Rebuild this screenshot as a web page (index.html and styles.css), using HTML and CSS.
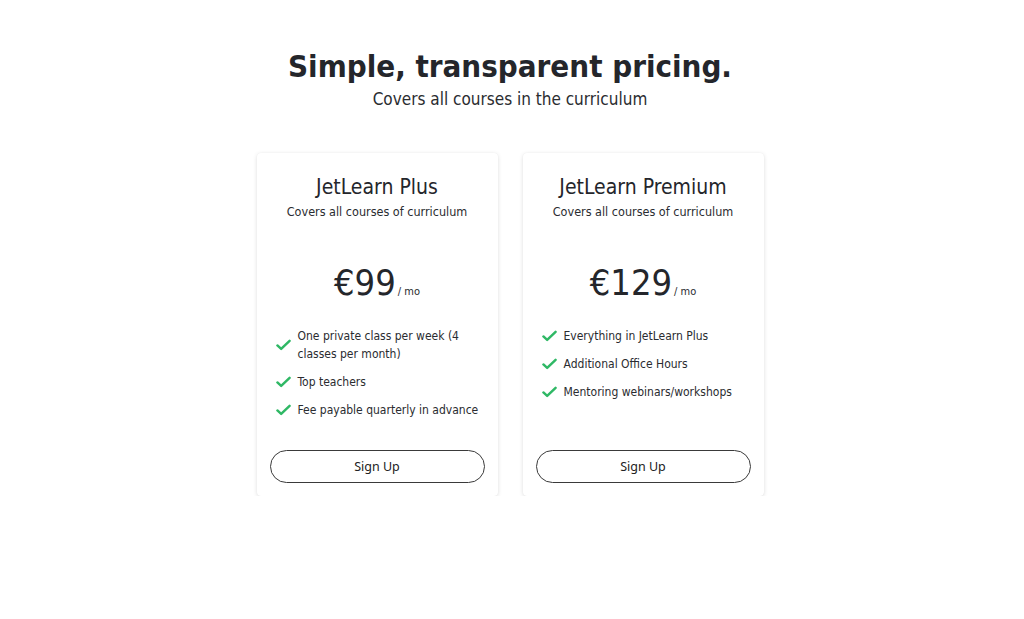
FILE: index.html
```html
<!DOCTYPE html>
<html lang="en">
<head>
<meta charset="utf-8">
<title>Pricing</title>
<link rel="stylesheet" href="styles.css">
</head>
<body>
<main class="page">
  <header class="hero">
    <h1 class="hero-title">Simple, transparent pricing.</h1>
    <p class="hero-sub">Covers all courses in the curriculum</p>
  </header>
  <section class="plans">
    <article class="plan">
      <h2 class="plan-name">JetLearn Plus</h2>
      <p class="plan-desc">Covers all courses of curriculum</p>
      <div class="plan-price"><span class="amount">€99</span><span class="per">/ mo</span></div>
      <ul class="features">
        <li class="feature"><svg class="check" viewBox="0 0 16 12"><path d="M1.5 6.5 L5.5 10.2 L14.5 1.5" fill="none" stroke="currentColor" stroke-width="2.6" stroke-linecap="round" stroke-linejoin="round"/></svg><span>One private class per week (4 classes per month)</span></li>
        <li class="feature"><svg class="check" viewBox="0 0 16 12"><path d="M1.5 6.5 L5.5 10.2 L14.5 1.5" fill="none" stroke="currentColor" stroke-width="2.6" stroke-linecap="round" stroke-linejoin="round"/></svg><span>Top teachers</span></li>
        <li class="feature"><svg class="check" viewBox="0 0 16 12"><path d="M1.5 6.5 L5.5 10.2 L14.5 1.5" fill="none" stroke="currentColor" stroke-width="2.6" stroke-linecap="round" stroke-linejoin="round"/></svg><span>Fee payable quarterly in advance</span></li>
      </ul>
      <button class="signup" type="button">Sign Up</button>
    </article>
    <article class="plan">
      <h2 class="plan-name">JetLearn Premium</h2>
      <p class="plan-desc">Covers all courses of curriculum</p>
      <div class="plan-price"><span class="amount">€129</span><span class="per">/ mo</span></div>
      <ul class="features">
        <li class="feature"><svg class="check" viewBox="0 0 16 12"><path d="M1.5 6.5 L5.5 10.2 L14.5 1.5" fill="none" stroke="currentColor" stroke-width="2.6" stroke-linecap="round" stroke-linejoin="round"/></svg><span>Everything in JetLearn Plus</span></li>
        <li class="feature"><svg class="check" viewBox="0 0 16 12"><path d="M1.5 6.5 L5.5 10.2 L14.5 1.5" fill="none" stroke="currentColor" stroke-width="2.6" stroke-linecap="round" stroke-linejoin="round"/></svg><span>Additional Office Hours</span></li>
        <li class="feature"><svg class="check" viewBox="0 0 16 12"><path d="M1.5 6.5 L5.5 10.2 L14.5 1.5" fill="none" stroke="currentColor" stroke-width="2.6" stroke-linecap="round" stroke-linejoin="round"/></svg><span>Mentoring webinars/workshops</span></li>
      </ul>
      <button class="signup" type="button">Sign Up</button>
    </article>
  </section>
</main>
</body>
</html>
```

FILE: styles.css
```css
* { box-sizing: border-box; }
html, body { margin: 0; padding: 0; background: #fff; }
body {
  font-family: "DejaVu Sans Condensed", "DejaVu Sans", sans-serif;
  color: #24262b;
}
.page {
  display: flex;
  flex-direction: column;
  align-items: center;
  padding: 46px 4px 0 0;
}
.hero { text-align: center; }
.hero-title {
  margin: 0;
  font-size: 31px;
  line-height: 40px;
  font-weight: bold;
  color: #24262b;
}
.hero-sub {
  margin: 2px 0 0;
  font-size: 17px;
  line-height: 22px;
  color: #2a2c30;
}
.plans {
  display: flex;
  gap: 25px;
  margin-top: 43px;
  align-items: stretch;
}
.plan {
  width: 241px;
  display: flex;
  flex-direction: column;
  align-items: stretch;
  padding: 20px 13px 13px;
  background: #fff;
  border-radius: 4px;
  box-shadow: 0 1px 4px rgba(0,0,0,0.13), 0 0 1px rgba(0,0,0,0.06);
  text-align: center;
}
.plan-name {
  margin: 0;
  font-size: 21px;
  line-height: 28px;
  font-weight: normal;
  color: #24262b;
}
.plan-desc {
  margin: 2px 0 0;
  font-size: 12.5px;
  line-height: 18px;
  color: #2a2c30;
}
.plan-price {
  margin-top: 40px;
  display: flex;
  justify-content: center;
  align-items: baseline;
  height: 44px;
}
.amount {
  font-size: 36px;
  line-height: 44px;
  color: #24262b;
}
.per {
  font-size: 11px;
  margin-left: 2px;
  color: #2a2c30;
}
.features {
  list-style: none;
  margin: 22px 0 0;
  padding: 0 0 0 6px;
  display: flex;
  flex-direction: column;
  gap: 10px;
  text-align: left;
}
.feature {
  display: flex;
  align-items: center;
  gap: 7px;
  font-size: 12px;
  line-height: 18px;
  color: #2a2c30;
}
.check {
  flex: none;
  width: 15px;
  height: 12px;
  color: #2fb865;
}
.signup {
  margin-top: auto;
  height: 33px;
  width: 100%;
  border: 1px solid #3a3a3a;
  border-radius: 17px;
  background: #fff;
  font-family: "Noto Sans", "Open Sans", sans-serif;
  font-size: 12.5px;
  color: #222;
  cursor: pointer;
}
.plan:first-child .signup { margin-top: 31px; }
```
